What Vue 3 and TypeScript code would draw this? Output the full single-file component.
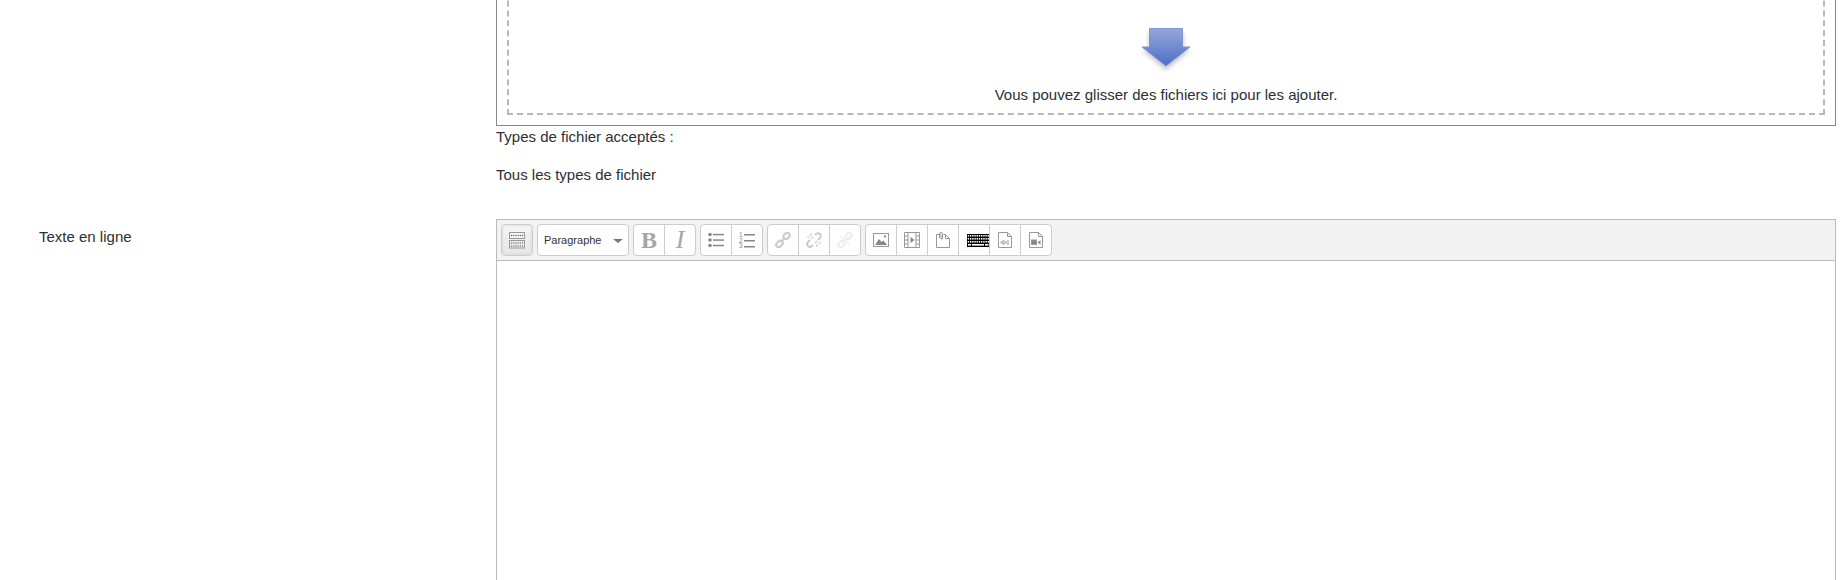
<script setup lang="ts">
const keyRows = [1, 4, 7]
</script>

<template>
  <div class="page">
    <div class="row">
      <div></div>
      <div>
        <div class="filepicker">
          <div class="dropzone">
            <svg class="drop-arrow" width="70" height="60" viewBox="0 0 70 60">
              <defs>
                <linearGradient id="arrowFill" x1="0" y1="0" x2="0" y2="1">
                  <stop offset="0" stop-color="#95a8da" />
                  <stop offset="1" stop-color="#4e6dc6" />
                </linearGradient>
                <filter id="arrowBlur" x="-30%" y="-30%" width="160%" height="170%">
                  <feGaussianBlur stdDeviation="2.500" />
                </filter>
              </defs>
              <path d="M18 12h34v17h7L35 49 11 29h7z" fill="#555" opacity=".35" filter="url(#arrowBlur)" />
              <path d="M18.500 7.500h33V26H59L35 45 11 26h7.500z" fill="url(#arrowFill)" stroke="#7f96d6" />
            </svg>
            <div class="drop-text">Vous pouvez glisser des fichiers ici pour les ajouter.</div>
          </div>
        </div>
        <p class="accepted">Types de fichier acceptés :</p>
        <p class="accepted">Tous les types de fichier</p>
      </div>
    </div>

    <div class="row editor-row">
      <label class="field-label">Texte en ligne</label>
      <div class="editor">
        <div class="toolbar">
          <div class="group single">
            <button class="btn active">
              <svg width="18" height="17" viewBox="0 0 18 17" fill="none" stroke="#999">
                <rect x="1.500" y=".5" width="15" height="6" />
                <rect x="1.500" y="8.500" width="15" height="7.500" />
                <path d="M3 3.500h12M3 11h12M3 14h12" stroke="#555" stroke-width="1.200" stroke-dasharray="1.200 1" />
              </svg>
            </button>
          </div>

          <button class="format">
            <span>Paragraphe</span>
            <i class="caret"></i>
          </button>

          <div class="group">
            <button class="btn glyph bold">B</button>
            <button class="btn glyph italic">I</button>
          </div>

          <div class="group">
            <button class="btn">
              <svg width="18" height="16" viewBox="0 0 18 16">
                <g fill="#888">
                  <circle cx="3" cy="2.500" r="1.800" />
                  <circle cx="3" cy="8" r="1.800" />
                  <circle cx="3" cy="13.500" r="1.800" />
                  <rect x="6" y="1.800" width="11" height="1.500" />
                  <rect x="6" y="7.300" width="11" height="1.500" />
                  <rect x="6" y="12.800" width="11" height="1.500" />
                </g>
              </svg>
            </button>
            <button class="btn">
              <svg width="18" height="17" viewBox="0 0 18 17">
                <g fill="#888" font-family="Liberation Sans, sans-serif" font-size="6.500">
                  <text x="1" y="5">1</text>
                  <text x="1" y="10.500">2</text>
                  <text x="1" y="16">3</text>
                  <rect x="6" y="2" width="11" height="1.500" />
                  <rect x="6" y="8" width="11" height="1.500" />
                  <rect x="6" y="14" width="11" height="1.500" />
                </g>
              </svg>
            </button>
          </div>

          <div class="group">
            <button class="btn">
              <svg width="16" height="16" viewBox="0 0 16 16" fill="none" stroke="#ccc" stroke-width="2.200">
                <rect x="8" y="1.500" width="7" height="5" rx="2.500" transform="rotate(-45 11.500 4)" />
                <rect x="1" y="9.500" width="7" height="5" rx="2.500" transform="rotate(-45 4.500 12)" />
                <path d="M6 10l4-4" />
              </svg>
            </button>
            <button class="btn">
              <svg width="16" height="16" viewBox="0 0 16 16" fill="none" stroke="#ccc" stroke-width="2">
                <path d="M9 3l1-1a2.800 2.800 0 0 1 4 4l-2 2M7 13l-1 1a2.800 2.800 0 0 1-4-4l2-2" />
                <path d="M5 1v3M1 5h3M11 15v-3M15 11h-3M11 9l-2 2M7 5L5 7" stroke-width="1.200" />
              </svg>
            </button>
            <button class="btn">
              <svg width="16" height="16" viewBox="0 0 16 16" fill="none" stroke="#eee" stroke-width="2.200">
                <rect x="8" y="1.500" width="7" height="5" rx="2.500" transform="rotate(-45 11.500 4)" />
                <rect x="1" y="9.500" width="7" height="5" rx="2.500" transform="rotate(-45 4.500 12)" />
                <path d="M3 4l10 8" stroke-width="1.200" />
              </svg>
            </button>
          </div>

          <div class="group">
            <button class="btn">
              <svg width="16" height="14" viewBox="0 0 16 14">
                <rect x=".5" y=".5" width="15" height="13" fill="#fff" stroke="#999" />
                <path d="M2 12l4-6 2.500 3 2-1.500L14 12z" fill="#888" />
                <rect x="11" y="2.500" width="2" height="2" fill="#888" />
              </svg>
            </button>
            <button class="btn">
              <svg width="16" height="16" viewBox="0 0 16 16">
                <path d="M.5.5h15v15H.5zM4 .5v15M12 .5v15M.5 4H4M.5 8H4M.5 12H4M12 4h3.500M12 8h3.500M12 12h3.500" fill="none" stroke="#999" />
                <path d="M6.500 5l4 3-4 3z" fill="#888" />
              </svg>
            </button>
            <button class="btn">
              <svg width="14" height="16" viewBox="0 0 14 16" fill="none" stroke="#999">
                <path d="M.5 2.500h4M7.500 2.500h2l4 4v9H.5v-13" />
                <path d="M9.500 2.500v4h4" />
                <path d="M3.500 6V2a1.500 1.500 0 0 1 3 0v5h-1.500V3" />
              </svg>
            </button>
            <button class="btn kbd">
              <svg width="23" height="13" viewBox="0 0 23 13">
                <rect width="23" height="13" fill="#000" />
                <g fill="#fff">
                  <template v-for="y in keyRows" :key="y">
                    <rect v-for="n in 10" :key="n" :x="n * 2.200 - 1.400" :y="y" width="1.400" height="1.600" />
                  </template>
                  <rect x="1" y="10" width="3" height="1.600" />
                  <rect x="5" y="10" width="12" height="1.600" />
                  <rect x="18" y="10" width="3.500" height="1.600" />
                </g>
              </svg>
            </button>
            <button class="btn">
              <svg width="14" height="16" viewBox="0 0 14 16" fill="none" stroke="#999">
                <path d="M.5.5h9l4 4v11H.5zM9.500.5v4h4" />
                <path d="M3 10h1l2-1.500v4L4 11H3zM8 9v3M10 8v5" stroke-width="1" />
              </svg>
            </button>
            <button class="btn">
              <svg width="14" height="16" viewBox="0 0 14 16" fill="none" stroke="#999">
                <path d="M.5.5h9l4 4v11H.5zM9.500.5v4h4" />
                <rect x="2.500" y="8" width="5" height="4.500" fill="#888" />
                <path d="M8.500 10.200l3-2v4.500z" fill="#888" stroke="none" />
              </svg>
            </button>
          </div>
        </div>
        <div class="content"></div>
      </div>
    </div>
  </div>
</template>

<style>
html,
body {
  margin: 0;
  height: 100%;
  overflow: hidden;
  background: #fff;
}
</style>

<style scoped>
.page {
  font-family: "Liberation Sans", Arial, sans-serif;
  font-size: 15px;
  line-height: 22.5px;
  color: #2d3033;
  padding-right: 12px;
}
.row {
  display: grid;
  grid-template-columns: 496px 1fr;
}
.filepicker {
  border: 1px solid #86868e;
  margin-top: -40px;
  height: 166px;
  box-sizing: border-box;
  padding: 10px;
}
.dropzone {
  height: 100%;
  box-sizing: border-box;
  border: 2px dashed #b8b8b8;
  display: flex;
  flex-direction: column;
  align-items: center;
  justify-content: flex-end;
  padding-bottom: 7px;
}
.drop-arrow {
  display: block;
  margin-bottom: 3px;
}
.drop-text {
  text-align: center;
}
.accepted {
  margin: 0 0 15.500px;
}
.editor-row {
  margin-top: 17px;
}
.field-label {
  padding: 7px 0 0 39px;
}
.editor {
  border: 1px solid #bbb;
  height: 500px;
}
.toolbar {
  display: flex;
  gap: 4px;
  height: 41px;
  box-sizing: border-box;
  padding: 4px 4px 0;
  background: #f2f2f2;
  border-bottom: 1px solid #bbb;
}
.group {
  display: flex;
  height: 32px;
  border: 1px solid #ccc;
  border-radius: 4px;
  background: #fff;
  box-sizing: border-box;
}
.btn {
  width: 31px;
  height: 30px;
  padding: 0;
  display: flex;
  align-items: center;
  justify-content: center;
  border: 0;
  border-left: 1px solid #ccc;
  background: none;
  font-family: "Liberation Serif", serif;
  color: #a6a6a6;
}
.btn:first-child {
  width: 30px;
  border-left: 0;
  border-radius: 3px 0 0 3px;
}
.kbd {
  justify-content: flex-start;
  padding-left: 8px;
}
.kbd svg {
  flex: none;
}
.single .btn {
  border-radius: 3px;
  background: linear-gradient(#f6f6f6, #e6e6e6);
  box-shadow: inset 0 0 3px #ccc;
}
.glyph {
  font-size: 24px;
}
.bold {
  font-weight: bold;
}
.italic {
  font-style: italic;
  font-size: 26px;
}
.format {
  width: 92px;
  height: 32px;
  box-sizing: border-box;
  border: 1px solid #ccc;
  border-radius: 4px;
  background: #fff;
  display: flex;
  align-items: center;
  justify-content: space-between;
  padding: 0 5px 0 6px;
  font-family: "Liberation Sans", Arial, sans-serif;
  font-size: 11px;
  color: #333;
}
.caret {
  width: 0;
  height: 0;
  border-left: 5px solid transparent;
  border-right: 5px solid transparent;
  border-top: 4px solid #777;
  margin-top: 2px;
}
.content {
  background: #fff;
}
</style>
